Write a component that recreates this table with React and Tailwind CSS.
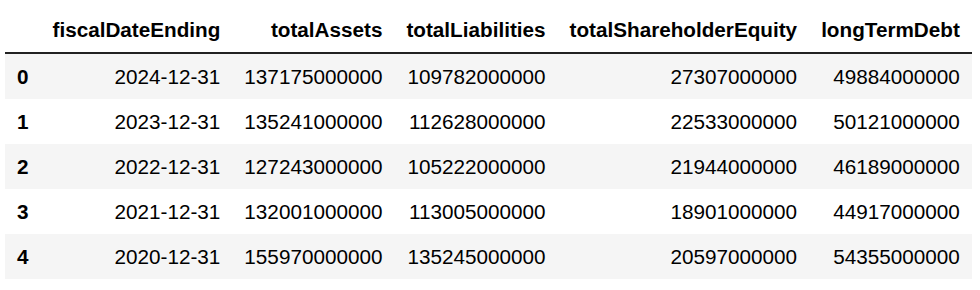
const columns = ["fiscalDateEnding", "totalAssets", "totalLiabilities", "totalShareholderEquity", "longTermDebt"];

const rows = [
  ["2024-12-31", "137175000000", "109782000000", "27307000000", "49884000000"],
  ["2023-12-31", "135241000000", "112628000000", "22533000000", "50121000000"],
  ["2022-12-31", "127243000000", "105222000000", "21944000000", "46189000000"],
  ["2021-12-31", "132001000000", "113005000000", "18901000000", "44917000000"],
  ["2020-12-31", "155970000000", "135245000000", "20597000000", "54355000000"],
];

export default function App() {
  return (
    <div className="w-[980px] h-[290px] bg-white overflow-hidden pt-[7px] pl-[5px]"
      style={{ fontFamily: '"Liberation Sans", Arial, sans-serif' }}>
      <table className="border-collapse text-[20.7px] leading-[21px] text-black">
        <thead>
          <tr className="border-b-2 border-[#222]">
            <th className="px-3 py-3"></th>
            {columns.map((c) => (
              <th key={c} className="px-3 py-3 text-right font-bold">{c}</th>
            ))}
          </tr>
        </thead>
        <tbody>
          {rows.map((r, i) => (
            <tr key={i} className={i % 2 === 0 ? "bg-[#f5f5f5]" : "bg-white"}>
              <th className="px-3 py-3 text-left font-bold">{i}</th>
              {r.map((v, j) => (
                <td key={j} className="px-3 py-3 text-right">{v}</td>
              ))}
            </tr>
          ))}
        </tbody>
      </table>
    </div>
  );
}
